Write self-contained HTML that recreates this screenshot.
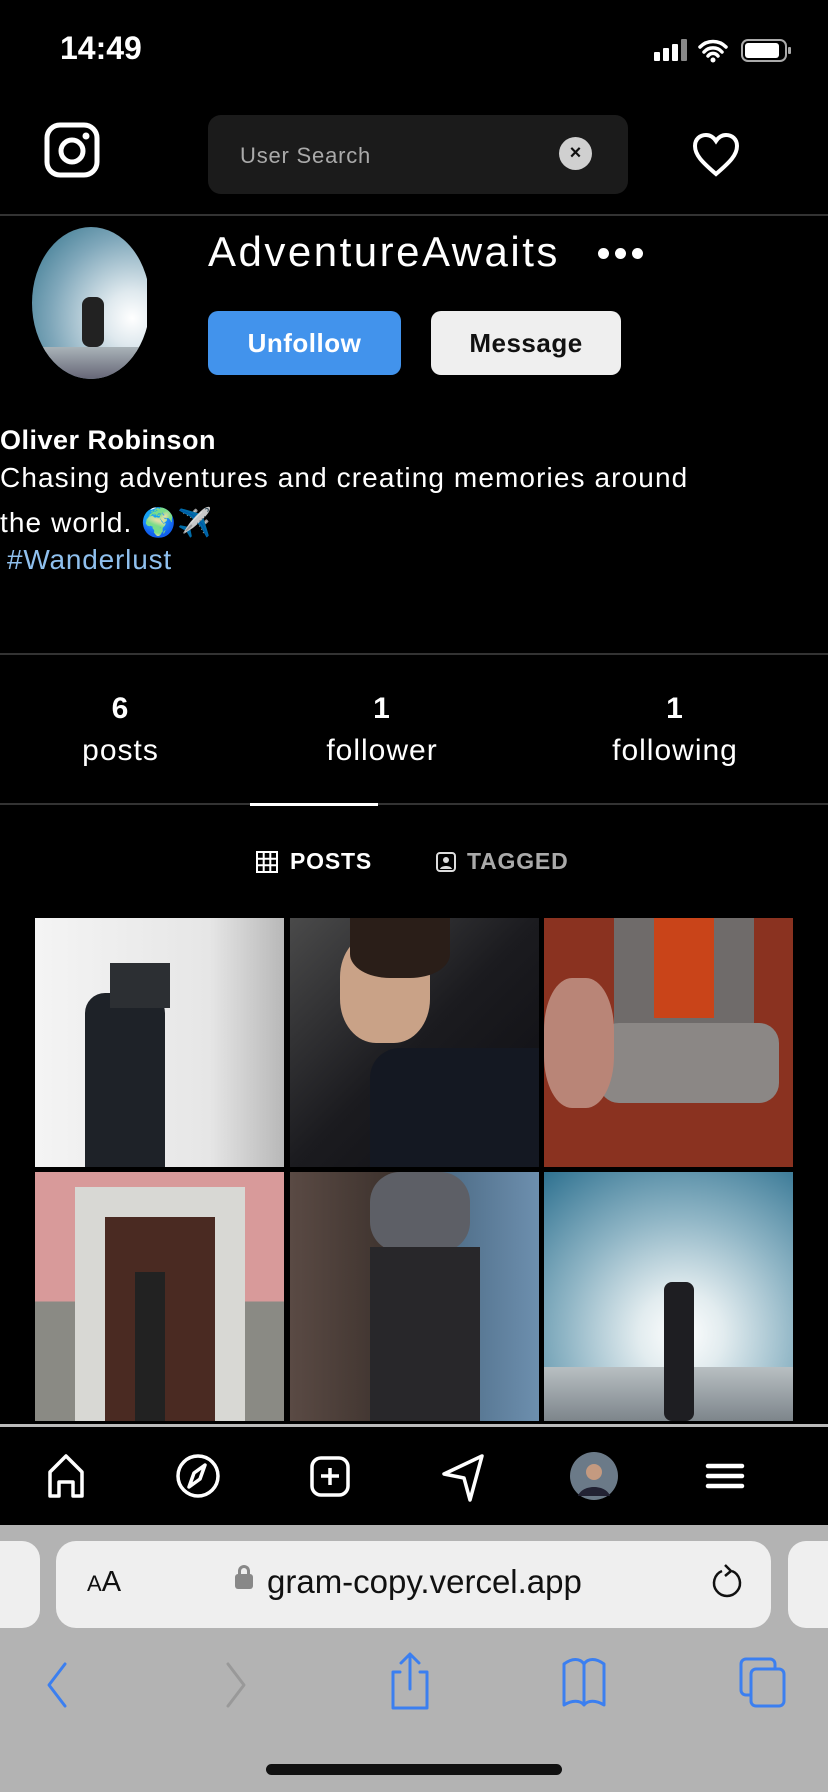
<!DOCTYPE html>
<html><head><meta charset="utf-8"><style>
*{margin:0;padding:0;box-sizing:border-box}
body{width:828px;height:1792px;background:#000;font-family:"Liberation Sans",sans-serif;color:#fff;position:relative;overflow:hidden}
.a{position:absolute}
.ph{position:absolute;width:249px;height:249px;overflow:hidden}
</style></head><body>
<div class="a" style="left:60px;top:30px;font-size:32px;font-weight:bold">14:49</div>
<svg class="a" style="left:650px;top:36px" width="150" height="30" viewBox="0 0 150 30">
<g fill="#fff"><rect x="4" y="16" width="6" height="9" rx="1"/><rect x="13" y="12" width="6" height="13" rx="1"/><rect x="22" y="8" width="6" height="17" rx="1"/><rect x="31" y="3" width="6" height="22" rx="1" fill="#888"/></g>
<path d="M50 11a18 18 0 0 1 26 0M54 16a12 12 0 0 1 18 0M58 20a6 6 0 0 1 10 0" stroke="#fff" stroke-width="3.5" fill="none" stroke-linecap="round"/><circle cx="63" cy="24" r="2.5" fill="#fff"/>
<rect x="92" y="4" width="44" height="21" rx="6" fill="none" stroke="#aaa" stroke-width="2"/><rect x="95" y="7" width="34" height="15" rx="3" fill="#fff"/><rect x="138" y="11" width="3" height="7" rx="1" fill="#aaa"/>
</svg>
<svg class="a" style="left:44px;top:122px" width="56" height="56" viewBox="0 0 56 56"><rect x="3" y="3" width="50" height="50" rx="13" fill="none" stroke="#fff" stroke-width="5"/><circle cx="28" cy="29" r="11" fill="none" stroke="#fff" stroke-width="5"/><circle cx="42" cy="14" r="3.5" fill="#fff"/></svg>
<div class="a" style="left:208px;top:115px;width:420px;height:79px;background:#1b1b1b;border-radius:13px"></div>
<div class="a" style="left:240px;top:143px;font-size:22px;color:#aaa;letter-spacing:0.8px">User Search</div>
<div class="a" style="left:559px;top:137px;width:33px;height:33px;border-radius:50%;background:#d0d0d0;color:#111;font-size:20px;font-weight:bold;text-align:center;line-height:33px">×</div>
<svg class="a" style="left:692px;top:132px" width="48" height="46" viewBox="0 0 48 46"><path d="M24 42C10 30 3 23 3 14 3 7 8 3 14 3c5 0 8 3 10 6 2-3 5-6 10-6 6 0 11 4 11 11 0 9-7 16-21 28z" fill="none" stroke="#fff" stroke-width="4"/></svg>
<div class="a" style="left:0;top:214px;width:828px;height:2px;background:#333"></div>
<div class="a" style="left:32px;top:227px;width:115px;height:152px;overflow:hidden"><div style="width:118px;height:152px;border-radius:50%;overflow:hidden;position:relative;background:radial-gradient(circle at 85% 60%,#fff 0%,#dfe9ee 20%,#7fa7ba 60%,#2c6f88 100%)">
<div class="a" style="left:50px;top:70px;width:22px;height:50px;background:#222;border-radius:8px"></div><div class="a" style="left:0;top:120px;width:118px;height:32px;background:linear-gradient(#a9b3b8,#667)"></div></div></div>
<div class="a" style="left:208px;top:228px;font-size:42px;letter-spacing:2.5px">AdventureAwaits</div>
<div class="a" style="left:598px;top:246px"><span style="display:inline-block;width:11px;height:11px;border-radius:50%;background:#fff;margin-right:6px"></span><span style="display:inline-block;width:11px;height:11px;border-radius:50%;background:#fff;margin-right:6px"></span><span style="display:inline-block;width:11px;height:11px;border-radius:50%;background:#fff"></span></div>
<div class="a" style="left:208px;top:311px;width:193px;height:64px;background:#4293ec;border-radius:10px;font-size:26px;font-weight:bold;text-align:center;line-height:64px;letter-spacing:0.5px">Unfollow</div>
<div class="a" style="left:431px;top:311px;width:190px;height:64px;background:#efefef;border-radius:10px;font-size:26px;font-weight:bold;color:#111;text-align:center;line-height:64px;letter-spacing:0.5px">Message</div>
<div class="a" style="left:0;top:425px;font-size:27px;font-weight:bold;letter-spacing:0.5px">Oliver Robinson</div>
<div class="a" style="left:0;top:455px;font-size:28px;line-height:45px;width:800px;letter-spacing:1.1px">Chasing adventures and creating memories around<br>the world. 🌍✈️</div>
<div class="a" style="left:7px;top:544px;font-size:28px;color:#8fc0ee;letter-spacing:0.8px">#Wanderlust</div>
<div class="a" style="left:0;top:653px;width:828px;height:2px;background:#333"></div>
<div class="a" style="left:18px;top:688px;width:205px;text-align:center;font-size:30px;line-height:42px;letter-spacing:1px"><b>6</b><br>posts</div>
<div class="a" style="left:282px;top:688px;width:200px;text-align:center;font-size:30px;line-height:42px;letter-spacing:1px"><b>1</b><br>follower</div>
<div class="a" style="left:575px;top:688px;width:200px;text-align:center;font-size:30px;line-height:42px;letter-spacing:1px"><b>1</b><br>following</div>
<div class="a" style="left:0;top:803px;width:828px;height:2px;background:#333"></div>
<div class="a" style="left:250px;top:803px;width:128px;height:3px;background:#fff"></div>
<svg class="a" style="left:256px;top:851px" width="22" height="22" viewBox="0 0 22 22"><path d="M1 1h20v20H1zM7.7 1v20M14.3 1v20M1 7.7h20M1 14.3h20" stroke="#fff" stroke-width="2" fill="none"/></svg>
<div class="a" style="left:290px;top:848px;font-size:23px;font-weight:bold;letter-spacing:0.8px">POSTS</div>
<svg class="a" style="left:436px;top:852px" width="20" height="20" viewBox="0 0 20 20"><rect x="1" y="1" width="18" height="18" rx="3" fill="none" stroke="#ddd" stroke-width="2"/><circle cx="10" cy="8" r="3" fill="#ddd"/><path d="M4 17c1-4 11-4 12 0z" fill="#ddd"/></svg>
<div class="a" style="left:467px;top:848px;font-size:23px;font-weight:bold;color:#aaa;letter-spacing:0.8px">TAGGED</div>
<div class="ph" style="left:35px;top:918px;background:linear-gradient(90deg,#f4f4f4,#e6e6e6 70%,#b8b8b8)"><div class="a" style="left:50px;top:75px;width:80px;height:174px;background:#1e2228;border-radius:20px 20px 0 0"></div><div class="a" style="left:75px;top:45px;width:60px;height:45px;background:#2c2f33"></div></div>
<div class="ph" style="left:290px;top:918px;background:linear-gradient(135deg,#4a4a4a,#1b1b1f 50%,#0d0d12)"><div class="a" style="left:50px;top:15px;width:90px;height:110px;background:#c9a287;border-radius:40%"></div><div class="a" style="left:60px;top:0;width:100px;height:60px;background:#2a1e18;border-radius:0 0 40% 40%"></div><div class="a" style="left:80px;top:130px;width:169px;height:119px;background:#141822;border-radius:30px 0 0 0"></div></div>
<div class="ph" style="left:544px;top:918px;background:#8a3220"><div class="a" style="left:70px;top:0;width:140px;height:110px;background:#6f6b6a"></div><div class="a" style="left:110px;top:0;width:60px;height:100px;background:#c94419"></div><div class="a" style="left:55px;top:105px;width:180px;height:80px;background:#8b8785;border-radius:20px"></div><div class="a" style="left:0;top:60px;width:70px;height:130px;background:#b98577;border-radius:40%"></div></div>
<div class="ph" style="left:35px;top:1172px;background:linear-gradient(#d89a9a 0,#d89a9a 52%,#8a8a84 52%)"><div class="a" style="left:40px;top:15px;width:170px;height:234px;background:#d8d8d4"></div><div class="a" style="left:70px;top:45px;width:110px;height:204px;background:#4a2a22"></div><div class="a" style="left:100px;top:100px;width:30px;height:149px;background:#222"></div></div>
<div class="ph" style="left:290px;top:1172px;background:linear-gradient(90deg,#5a4a44 0,#3e332e 40%,#4c6a84 60%,#6d8fae)"><div class="a" style="left:80px;top:0;width:100px;height:80px;background:#5d5f66;border-radius:30px"></div><div class="a" style="left:80px;top:75px;width:110px;height:174px;background:#28272a"></div></div>
<div class="ph" style="left:544px;top:1172px;background:radial-gradient(circle at 55% 65%,#fff 0,#e2ecef 20%,#8fb5c5 55%,#2e7190 100%)"><div class="a" style="left:0;top:195px;width:249px;height:54px;background:linear-gradient(#b8bfc2,#7d858b)"></div><div class="a" style="left:120px;top:110px;width:30px;height:139px;background:#1e1e22;border-radius:8px"></div></div>
<div class="a" style="left:0;top:1424px;width:828px;height:3px;background:#bbb"></div>
<svg class="a" style="left:0;top:1448px" width="828" height="60" viewBox="0 0 828 60">
<g fill="none" stroke="#fff" stroke-width="3.5" stroke-linejoin="round">
<path d="M50 48V24L66 8l16 16v24h-9V34h-14v14z"/>
<circle cx="198" cy="28" r="20"/><path d="M205 17l-11 8-5 14 11-8z"/>
<rect x="312" y="10" width="36" height="37" rx="9"/><path d="M330 20v17M321 28h18"/>
<path d="M482 8L444 26l20 4 6 22z"/>
<path d="M708 18h34M708 28h34M708 38h34" stroke-linecap="round" stroke-width="4.5"/>
</g>
<circle cx="594" cy="28" r="24" fill="#6b7a88"/><circle cx="594" cy="24" r="8" fill="#c49a80"/><path d="M578 48c4-12 28-12 32 0z" fill="#223"/>
</svg>
<div class="a" style="left:0;top:1525px;width:828px;height:267px;background:#b3b3b3"></div>
<div class="a" style="left:-20px;top:1541px;width:60px;height:87px;background:#efefef;border-radius:18px"></div>
<div class="a" style="left:788px;top:1541px;width:60px;height:87px;background:#efefef;border-radius:18px"></div>
<div class="a" style="left:56px;top:1541px;width:715px;height:87px;background:#efefef;border-radius:20px"></div>
<div class="a" style="left:87px;top:1566px;color:#111;font-size:29px"><span style="font-size:22px">A</span>A</div>
<div class="a" style="left:235px;top:1574px;width:18px;height:15px;background:#888;border-radius:3px"></div>
<div class="a" style="left:238px;top:1565px;width:12px;height:14px;border:3px solid #888;border-bottom:none;border-radius:6px 6px 0 0"></div>
<div class="a" style="left:267px;top:1563px;color:#111;font-size:33px">gram-copy.vercel.app</div>
<svg class="a" style="left:710px;top:1563px" width="36" height="40" viewBox="0 0 36 40"><path d="M22 8a13 13 0 1 1-10 0" fill="none" stroke="#111" stroke-width="2.5"/><path d="M15 2l6 6-6 5" fill="none" stroke="#111" stroke-width="2.5"/></svg>
<svg class="a" style="left:0;top:1650px" width="828" height="60" viewBox="0 0 828 60">
<g fill="none" stroke-width="3" stroke-linecap="round" stroke-linejoin="round">
<path d="M65 14L49 35l16 21" stroke="#3b7ff0"/>
<path d="M228 14l16 21-16 21" stroke="#999"/>
<path d="M410 5v34M401 13l9-9 9 9M400 22h-7v36h34V22h-7" stroke="#3b7ff0"/>
<path d="M564 55V14c8-6 16-6 20 0 4-6 12-6 20 0v41c-8-5-16-5-20 0-4-5-12-5-20 0zM584 14v41" stroke="#3b7ff0"/>
<rect x="741" y="9" width="34" height="36" rx="5" stroke="#3b7ff0"/><rect x="751" y="19" width="33" height="37" rx="5" fill="#b3b3b3" stroke="#3b7ff0"/>
</g></svg>
<div class="a" style="left:266px;top:1764px;width:296px;height:11px;border-radius:6px;background:#111"></div>
</body></html>
